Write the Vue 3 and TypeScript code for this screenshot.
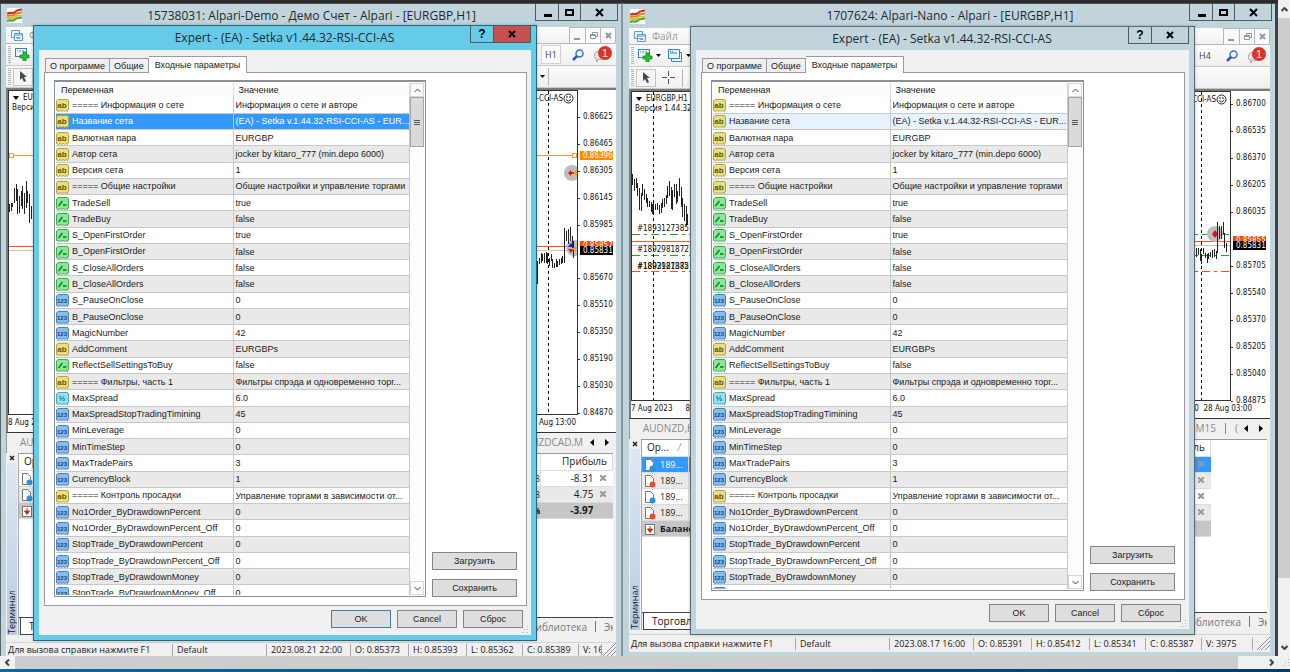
<script setup lang="ts">
type Kind = 'text' | 'flag' | 'int' | 'real'
interface Param { kind: Kind; name: string; value: string }
interface Tag { label: string; tone: string; top: number }
interface Order { dot: string; id: string; tail: string; profit: string; tone: string }
interface Terminal {
  key: string
  title: string
  dialogActive: boolean
  menu: string
  period: string
  symbol: string
  prices: string[]
  tags: Tag[]
  dateLeft: string
  dateLeft2: string
  dateRight: string
  tabLeft: string
  tabRight: string
  colLeft: string
  colRight: string
  bottomLeft: string
  bottomRight: string
  orders: Order[]
  status: string[]
  leftBars: string
  rightBars: string
}

const params: Param[] = [
  { kind: 'text', name: '===== Информация о сете', value: 'Информация о сете и авторе' },
  { kind: 'text', name: 'Название сета', value: '(EA) - Setka v.1.44.32-RSI-CCI-AS - EUR...' },
  { kind: 'text', name: 'Валютная пара', value: 'EURGBP' },
  { kind: 'text', name: 'Автор сета', value: 'jocker by kitaro_777 (min.depo 6000)' },
  { kind: 'text', name: 'Версия сета', value: '1' },
  { kind: 'text', name: '===== Общие настройки', value: 'Общие настройки и управление торгами' },
  { kind: 'flag', name: 'TradeSell', value: 'true' },
  { kind: 'flag', name: 'TradeBuy', value: 'false' },
  { kind: 'flag', name: 'S_OpenFirstOrder', value: 'true' },
  { kind: 'flag', name: 'B_OpenFirstOrder', value: 'false' },
  { kind: 'flag', name: 'S_CloseAllOrders', value: 'false' },
  { kind: 'flag', name: 'B_CloseAllOrders', value: 'false' },
  { kind: 'int', name: 'S_PauseOnClose', value: '0' },
  { kind: 'int', name: 'B_PauseOnClose', value: '0' },
  { kind: 'int', name: 'MagicNumber', value: '42' },
  { kind: 'text', name: 'AddComment', value: 'EURGBPs' },
  { kind: 'flag', name: 'ReflectSellSettingsToBuy', value: 'false' },
  { kind: 'text', name: '===== Фильтры, часть 1', value: 'Фильтры спрэда и одновременно торг...' },
  { kind: 'real', name: 'MaxSpread', value: '6.0' },
  { kind: 'int', name: 'MaxSpreadStopTradingTimining', value: '45' },
  { kind: 'int', name: 'MinLeverage', value: '0' },
  { kind: 'int', name: 'MinTimeStep', value: '0' },
  { kind: 'int', name: 'MaxTradePairs', value: '3' },
  { kind: 'int', name: 'CurrencyBlock', value: '1' },
  { kind: 'text', name: '===== Контроль просадки', value: 'Управление торгами в зависимости от...' },
  { kind: 'int', name: 'No1Order_ByDrawdownPercent', value: '0' },
  { kind: 'int', name: 'No1Order_ByDrawdownPercent_Off', value: '0' },
  { kind: 'int', name: 'StopTrade_ByDrawdownPercent', value: '0' },
  { kind: 'int', name: 'StopTrade_ByDrawdownPercent_Off', value: '0' },
  { kind: 'int', name: 'StopTrade_ByDrawdownMoney', value: '0' },
  { kind: 'int', name: 'StopTrade_ByDrawdownMoney_Off', value: '0' },
]

const kindLook: Record<Kind, { fill: string; edge: string; ink: string; mark: string }> = {
  text: { fill: '#e9df7e', edge: '#b3a53c', ink: '#5d5410', mark: 'ab' },
  flag: { fill: '#86ea92', edge: '#3fae50', ink: '#14722a', mark: '' },
  int: { fill: '#86bdf0', edge: '#4583c0', ink: '#123f78', mark: '123' },
  real: { fill: '#8fe3ee', edge: '#3fa9b8', ink: '#146878', mark: '½' },
}

/* Each bar is "x:high-low" on a grid three times finer than the plot. */
function bars(source: string, dx: number, dy: number): string {
  return source
    .split(' ')
    .map((item) => {
      const [x, high, low] = item.split(/[:-]/).map(Number)
      return `M${Math.round(x / 3) + dx}.5 ${Math.round(high / 3) + dy}V${Math.round(low / 3) + dy}`
    })
    .join('')
}

const terminals: Terminal[] = [
  {
    key: 'demo',
    title: '15738031: Alpari-Demo - Демо Счет - Alpari - [EURGBP,H1]',
    dialogActive: true,
    menu: 'Файл',
    period: 'H1',
    symbol: 'EURGBP,H1',
    prices: ['0.86625', '0.86465', '0.86305', '0.86145', '0.85985', '', '0.85670', '0.85510', '0.85350', '0.85190', '0.85030', '0.84870'],
    tags: [
      { label: '0.86396', tone: 'orange', top: 61 },
      { label: '0.85857', tone: 'red', top: 151 },
      { label: '0.85831', tone: 'black', top: 156 },
    ],
    dateLeft: '8 Aug 2023',
    dateLeft2: '',
    dateRight: '25 Aug 13:00',
    tabLeft: 'AUDNZD,H1',
    tabRight: 'NZDCAD,M',
    colLeft: 'Ордер',
    colRight: 'Прибыль',
    bottomLeft: 'Торговля',
    bottomRight: 'Эк',
    orders: [
      { dot: 'blue', id: '189...', tail: '8', profit: '-8.31', tone: 'plain' },
      { dot: 'blue', id: '189...', tail: '8', profit: '4.75', tone: 'alt' },
      { dot: 'balance', id: 'Баланс', tail: '%', profit: '-3.97', tone: 'total' },
    ],
    status: ['Default', '2023.08.21 22:00', 'O: 0.85373', 'H: 0.85393', 'L: 0.85362', 'C: 0.85389', 'V: 16'],
    leftBars: bars('30:100-122 35:95-120 40:95-108 45:50-95 50:38-90 55:55-130 60:75-125 65:60-105 70:45-115 75:65-130 80:30-110 85:60-95 90:70-155 95:105-145', -10, 80),
    rightBars: bars('25:540-610 30:530-548 35:515-545 40:520-540 45:515-545 50:513-545 55:515-550 60:530-555 66:520-540 70:535-562 75:545-560 80:535-558 85:540-558 90:535-552 95:530-548 100:525-545 106:440-545 112:450-480 118:445-490 123:437-480 128:465-500 133:480-530', 12, -10),
  },
  {
    key: 'nano',
    title: '1707624: Alpari-Nano - Alpari - [EURGBP,H1]',
    dialogActive: false,
    menu: 'Файл',
    period: 'H4',
    symbol: 'EURGBP,H1',
    prices: ['0.86700', '0.86535', '0.86370', '0.86205', '0.86035', '', '0.85705', '0.85540', '0.85370', '0.85205', '0.85040', '0.84875'],
    tags: [
      { label: '0.85855', tone: 'red', top: 145 },
      { label: '0.85831', tone: 'black', top: 150 },
    ],
    dateLeft: '7 Aug 2023',
    dateLeft2: '8 Aug',
    dateRight: '00  28 Aug 03:00',
    tabLeft: 'AUDNZD,H1',
    tabRight: 'NZDUSD,M15',
    colLeft: 'Ор...',
    colRight: 'Прибыль',
    bottomLeft: 'Торговля',
    bottomRight: 'Эк',
    orders: [
      { dot: 'blue', id: '189...', tail: '', profit: '', tone: 'picked' },
      { dot: 'red', id: '189...', tail: '', profit: '', tone: 'alt' },
      { dot: 'blue', id: '189...', tail: '', profit: '', tone: 'plain' },
      { dot: 'red', id: '189...', tail: '', profit: '', tone: 'alt' },
      { dot: 'balance', id: 'Баланс', tail: '', profit: '', tone: 'total' },
    ],
    status: ['Default', '2023.08.17 16:00', 'O: 0.85391', 'H: 0.85412', 'L: 0.85341', 'C: 0.85387', 'V: 3975'],
    leftBars: bars('25:278-312 30:295-330 35:292-322 40:305-345 45:322-388 50:335-390 55:310-345 60:325-358 65:338-365 70:350-378 75:360-378 80:362-392 85:370-398 88:358-392 94:370-388 100:366-388 105:372-400 110:366-396 115:355-380 120:350-378 125:343-368 130:315-350 134:300-345 140:318-385 145:328-388 150:310-348 155:308-370 160:330-362 165:292-345 170:318-378 175:350-408 180:370-420 185:375-435 190:400-432', -8, -11),
    rightBars: bars('45:492-520 50:500-528 56:500-522 62:505-540 67:520-550 72:500-520 78:515-530 83:520-545 88:515-535 94:512-528 100:508-530 105:505-528 110:510-535 115:422-515 120:435-475 126:435-475 131:422-460 136:455-500 141:485-512', 9, -11),
  },
]
</script>

<template>
  <main class="desktop">
    <div class="viewport">
      <section v-for="t in terminals" :key="t.key" class="terminal" :class="t.key">
        <header class="titlebar">
          <svg class="app-icon" width="15" height="15" viewBox="0 0 15 15">
            <rect width="15" height="15" fill="#fff" />
            <g fill="none" stroke-width="2">
              <path d="M0 6C3 3 5 7 8 4S12 3 15 1" stroke="#c9302a" />
              <path d="M0 8.500C3 5.500 5 9.500 8 6.500S12 6 15 4" stroke="#e2812c" />
              <path d="M0 11C3 8 5 12 8 9S12 9 15 7" stroke="#d8c028" />
              <path d="M0 13.500C3 10.500 5 14.500 8 11.500S12 11 15 9.500" stroke="#46a83a" />
            </g>
          </svg>
          <h1>{{ t.title }}</h1>
          <div class="sysbuttons">
            <button type="button" aria-label="Свернуть"><svg width="9" height="9"><path d="M1 6h8v3H1z" /></svg></button>
            <button type="button" aria-label="Развернуть"><svg width="9" height="9"><path d="M0 1h9v7H0zM2 3v3h5V3z" fill-rule="evenodd" /></svg></button>
            <button type="button" class="wide" aria-label="Закрыть"><svg width="9" height="9"><path d="M1 1l7 7M8 1l-7 7" stroke="#000" stroke-width="2" /></svg></button>
          </div>
        </header>

        <div class="workspace">
          <nav class="menubar">
            <svg width="13" height="13" fill="#e6f2fc" stroke="#5b9bd8"><path d="M1.500 1.500h8v7h-8z" /><path d="M4.500 4.500h8v7h-8zM4.500 6h8" /><path d="M6 9l1-1 1 2 1-2 1 2" fill="none" /></svg>
            <a href="#file">{{ t.menu }}</a>
            <div class="mdi">
              <button type="button" aria-label="Свернуть график"><svg width="9" height="9"><path d="M1 7h6v2H1z" fill="#8d99a8" /></svg></button>
              <button type="button" aria-label="Восстановить график"><svg width="9" height="9" fill="none" stroke="#8d99a8"><path d="M3.500 3V1.500h5v4H7M1.500 3.500h5v4h-5zM1 4.500h6" /></svg></button>
              <button type="button" aria-label="Закрыть график"><svg width="9" height="9"><path d="M2 2l5 5M7 2l-5 5" stroke="#8d99a8" stroke-width="2" /></svg></button>
            </div>
          </nav>

          <div class="toolbar">
            <i class="grip"></i>
            <svg width="15" height="13"><rect x=".5" y=".5" width="11" height="8" fill="#f4fbff" stroke="#3a82c8" /><path d="M2 3h1M4 3h2M7 3h2" stroke="#3a82c8" /><path d="M8 4h3v3h3v3h-3v3H8v-3H5V7h3z" fill="#1fc52f" stroke="#12891f" stroke-width=".8" /></svg>
            <svg class="caret" width="5" height="3"><path d="M0 0h5L2.500 3z" /></svg>
            <svg class="gap" width="15" height="13" fill="#e8f4fc" stroke="#3a82c8"><path d="M3.500 3.500h10v9h-10z" /><path d="M.5 .5h11v9H.5z" /><path d="M2 4h7M2 2.500h1M4 2.500h1" /></svg>
            <svg class="caret" width="5" height="3"><path d="M0 0h5L2.500 3z" /></svg>
            <div class="tools-right">
              <button type="button" class="period">{{ t.period }}</button>
              <svg class="search" width="12" height="12" fill="none"><circle cx="7.500" cy="4.500" r="3.500" stroke="#3b6fd6" stroke-width="1.500" /><path d="M5 7L1 11" stroke="#2b58c0" stroke-width="2.500" /></svg>
              <svg class="alerts" width="20" height="18"><path d="M2 8c0-4 9-4 9 1s-4 5-6 4l-1 3-1-3C1 12 1 9 2 8z" fill="#e2e2e6" stroke="#a8a8b0" /><circle cx="12" cy="7" r="7" fill="#df3320" /><text x="9" y="11" font-size="11" fill="#fff" font-family="Liberation Sans, sans-serif">1</text></svg>
            </div>
          </div>

          <div class="toolbar second">
            <i class="grip"></i>
            <button type="button" class="pointer" aria-label="Курсор"><svg width="9" height="12"><path d="M1 0v9l2-2 2 4 2-1-2-4h3z" fill="#4a4a4a" /></svg></button>
            <svg class="cross" width="13" height="13" stroke="#555" fill="none"><path d="M6.500 0v5M6.500 8v5M0 6.500h5M8 6.500h5" /></svg>
            <i class="rule"></i>
            <div v-if="t.dialogActive" class="tools-right"><svg class="caret" width="5" height="3"><path d="M0 0h5L2.500 3z" /></svg><i class="rule"></i></div>
          </div>

          <div class="chart">
            <div class="plot-row">
              <div class="plot">
                <template v-if="t.dialogActive">
                  <svg class="lines" width="100%" height="100%">
                    <path d="M0 64.500h2000" stroke="#f79a2c" />
                    <path d="M0 155.500h2000" stroke="#ff4a10" />
                    <path d="M0 159.500h2000" stroke="#c4c4c4" />
                    <rect x=".5" y="62.500" width="4" height="4" fill="#fff" stroke="#f79a2c" />
                    <path :d="t.leftBars" stroke="#222" />
                  </svg>
                  <svg class="edge" width="60" height="100%">
                    <path d="M31.500 0v400" stroke="#000" stroke-dasharray="3 3" />
                    <circle cx="55" cy="82" r="8" fill="#bdbdbd" />
                    <path d="M51 82l3-3v2h3v2h-3v2z" fill="#e01010" /><path d="M56 82l4-3v6z" fill="#f5a300" />
                    <circle cx="57" cy="157" r="8" fill="#bdbdbd" />
                    <path :d="t.rightBars" stroke="#222" />
                    <path d="M51 156l3-4 3 4z" fill="#1818e0" /><path d="M51 158h6l-3 4z" fill="#e01010" /><path d="M55 158l4-3v6z" fill="#f5a300" />
                    <rect x="55.500" y="62.500" width="4" height="4" fill="#fff" stroke="#f79a2c" />
                  </svg>
                </template>
                <template v-else>
                  <svg class="lines" width="100%" height="100%">
                    <g stroke-dasharray="8 4 3 4"><path d="M0 142.500h2000M0 163.500h2000" stroke="#2f9a2f" /><path d="M0 179.500h2000" stroke="#ff4a10" /></g>
                    <path d="M0 149.500h2000" stroke="#ff5a1c" />
                    <path d="M0 153.500h2000" stroke="#c4c4c4" />
                    <path d="M21.500 0v400" stroke="#000" stroke-dasharray="3 3" />
                    <path :d="t.leftBars" stroke="#222" />
                  </svg>
                  <svg class="edge" width="60" height="100%">
                    <circle cx="45" cy="142" r="8" fill="#bdbdbd" />
                    <path d="M31.500 0v400" stroke="#000" stroke-dasharray="3 3" />
                    <path d="M42 142l3-4 3 4-3 4z" fill="#e01010" />
                    <path :d="t.rightBars" stroke="#222" />
                  </svg>
                  <span class="order-line first">#1893127385 sell</span>
                  <span class="order-line second">#1892981872 sell</span>
                  <span class="order-line third">#1892981872 tp</span>
                  <span class="order-line third">#1893127385 tp</span>
                </template>
                <div class="caption"><svg width="6" height="4"><path d="M0 0h6L3 4z" /></svg><span>{{ t.symbol }}</span></div>
                <div class="version">Версия 1.44.32</div>
                <div class="expert"><span>RSI-CCI-AS</span><svg width="11" height="11" fill="none" stroke="#222"><circle cx="5.500" cy="5.500" r="4.500" /><path d="M3 6.500q2.500 3 5 0M4 3v2M7 3v2" /></svg></div>
              </div>
              <div class="prices">
                <span v-for="(p, i) in t.prices" :key="i" :class="{ blank: !p }">{{ p }}</span>
                <b v-for="g in t.tags" :key="g.label" :class="g.tone" :style="{ top: g.top + 'px' }">{{ g.label }}</b>
              </div>
            </div>
            <div class="dates"><span>{{ t.dateLeft }}</span><span class="next">{{ t.dateLeft2 }}</span><span class="last">{{ t.dateRight }}</span></div>
          </div>

          <div class="tabstrip">
            <button type="button">{{ t.tabLeft }}</button>
            <div class="tab-end">
              <button type="button">{{ t.tabRight }}</button>
              <span v-if="!t.dialogActive" class="cut"><i></i>(</span>
              <svg width="4" height="7"><path d="M4 0v7L0 3.500z" /></svg>
              <svg width="4" height="7"><path d="M0 0v7l4-3.500z" /></svg>
            </div>
          </div>

          <div class="panel">
            <div class="side">
              <button type="button" aria-label="Закрыть панель"><svg width="6" height="6"><path d="M1 1l4 4M5 1L1 5" stroke="#222" stroke-width="1.500" /></svg></button>
              <span>Терминал</span>
            </div>
            <div class="panel-main">
              <div class="sheet">
                <table class="orders">
                  <colgroup><col class="w-id" /><col /><col class="w-sum" /><col class="w-x" /></colgroup>
                  <thead><tr><th>{{ t.colLeft }} <em v-if="!t.dialogActive">/</em></th><th></th><th class="c-end" colspan="2">{{ t.colRight }}</th></tr></thead>
                  <tbody>
                    <tr v-for="(o, i) in t.orders" :key="i" :class="o.tone">
                      <td class="c-id">
                        <svg v-if="o.dot !== 'balance'" width="12" height="13"><path d="M1.500 .5h5l3 3v8h-8z" fill="#fff" stroke="#777" /><circle cx="8.500" cy="9.500" r="3" :fill="o.dot === 'blue' ? '#2f8fd8' : '#e0502a'" /></svg>
                        <svg v-else width="12" height="13"><rect x="1.500" y="1.500" width="9" height="10" fill="#fff" stroke="#777" /><path d="M6 3v4M3.500 6L6 9.500 8.500 6z" stroke="#cc2d12" fill="#cc2d12" /></svg>{{ o.id }}
                      </td>
                      <td class="c-mid">{{ o.tail }}</td>
                      <td class="c-sum">{{ o.profit }}</td>
                      <td class="c-x"><svg v-if="o.tone !== 'total'" width="6" height="6"><path d="M0 0l6 6M6 0L0 6" stroke="#999" stroke-width="2" /></svg></td>
                    </tr>
                  </tbody>
                </table>
              </div>
              <div class="panel-tabs">
                <button type="button" class="on">{{ t.bottomLeft }}</button>
                <div class="more"><button type="button">Библиотека</button><i></i><button type="button" class="trim">{{ t.bottomRight }}</button></div>
              </div>
            </div>
          </div>

          <footer class="status">
            <span class="hint">Для вызова справки нажмите F1</span>
            <span v-for="s in t.status" :key="s">{{ s }}</span>
            <svg width="13" height="13" stroke="#8a8a8a" fill="none"><path d="M0 13L13 0M4 13l9-9M8 13l5-5" /></svg>
          </footer>
        </div>

        <div class="dialog" :class="{ active: t.dialogActive }" role="dialog">
          <header>
            <h2>Expert - (EA) - Setka v1.44.32-RSI-CCI-AS</h2>
            <div class="sysbuttons">
              <button type="button">?</button>
              <button type="button" class="wide close" aria-label="Закрыть"><svg width="9" height="9"><path d="M1 1l6 6M7 1L1 7" stroke="#000" stroke-width="2" /></svg></button>
            </div>
          </header>
          <div class="body">
            <div class="tabs" role="tablist">
              <button type="button" role="tab">О программе</button>
              <button type="button" role="tab">Общие</button>
              <button type="button" role="tab" class="on">Входные параметры</button>
            </div>
            <div class="page">
              <div class="list">
                <div class="rows">
                  <table>
                    <thead><tr><th>Переменная</th><th>Значение</th></tr></thead>
                    <tbody>
                      <tr v-for="(p, i) in params" :key="p.name" :class="{ picked: i === 1 }">
                        <td class="name">
                          <svg width="13" height="13">
                            <path d="M.5 2L2 .5h9.500l1 1.500v8l-1 2.500-1.500-1-1.500 1-1.500-1-1.500 1-1.500-1-1.500 1-2-1z" :fill="kindLook[p.kind].fill" :stroke="kindLook[p.kind].edge" />
                            <path v-if="p.kind === 'flag'" d="M2.500 9l4-5M7 8h3.500" fill="none" :stroke="kindLook.flag.ink" stroke-width="1.300" />
                            <text v-else x="6" y="9" text-anchor="middle" font-weight="bold" font-family="Liberation Sans, sans-serif" :font-size="p.kind === 'int' ? 6 : 8" :fill="kindLook[p.kind].ink">{{ kindLook[p.kind].mark }}</text>
                          </svg>{{ p.name }}
                        </td>
                        <td>{{ p.value }}</td>
                      </tr>
                    </tbody>
                  </table>
                </div>
                <div class="scroll">
                  <button type="button" aria-label="Вверх"><svg width="7" height="5" fill="none" stroke="#444"><path d="M.5 4l3-3 3 3" /></svg></button>
                  <div class="thumb"><i></i><i></i><i></i></div>
                  <button type="button" class="down" aria-label="Вниз"><svg width="7" height="5" fill="none" stroke="#444"><path d="M.5 1l3 3 3-3" /></svg></button>
                </div>
              </div>
              <div class="actions">
                <button type="button" class="push">Загрузить</button>
                <button type="button" class="push">Сохранить</button>
              </div>
            </div>
            <div class="answers">
              <button type="button" class="push" :class="{ primary: t.dialogActive }">OK</button>
              <button type="button" class="push">Cancel</button>
              <button type="button" class="push">Сброс</button>
              <svg class="dots" width="7" height="7" fill="#b5b5b5"><path d="M5 0h1v1H5zM5 3h1v1H5zM2 3h1v1H2zM5 6h1v1H5zM2 6h1v1H2zM0 6h1v1H0z" /></svg>
            </div>
          </div>
        </div>
      </section>

      <div class="vbar">
        <button type="button" aria-label="Прокрутить вверх"><svg width="7" height="5" fill="none" stroke="#444" stroke-width="2"><path d="M.5 4l3-3 3 3" /></svg></button>
        <div class="vthumb"></div>
        <div class="vrest"></div>
        <button type="button" aria-label="Прокрутить вниз"><svg width="7" height="5" fill="none" stroke="#444" stroke-width="2"><path d="M.5 1l3 3 3-3" /></svg></button>
      </div>
    </div>
    <div class="hbar">
      <button type="button" aria-label="Прокрутить влево"><svg width="5" height="7" fill="none" stroke="#444" stroke-width="2"><path d="M4 .5l-3 3 3 3" /></svg></button>
      <div class="hthumb"></div>
      <button type="button" class="right" aria-label="Прокрутить вправо"><svg width="5" height="7" fill="none" stroke="#444" stroke-width="2"><path d="M1 .5l3 3-3 3" /></svg></button>
      <svg width="7" height="7" fill="#b5b5b5"><path d="M5 0h1v1H5zM5 3h1v1H5zM2 3h1v1H2zM5 6h1v1H5zM2 6h1v1H2zM0 6h1v1H0z" /></svg>
    </div>
  </main>
</template>

<style>
body { margin: 0; background: #0b5c8e; }
</style>

<style scoped>
* { box-sizing: border-box; }
.desktop { min-height: 100vh; display: flex; flex-direction: column; padding-bottom: 3px; background: linear-gradient(90deg, #0a6a9c, #003a72); font: 10px/14px "Open Sans", "Noto Sans", sans-serif; color: #1a1a1a; }
button { font: inherit; color: inherit; padding: 0; border: 0; background: none; }
svg { display: block; flex: none; }
h1, h2 { margin: 0; font-weight: 400; font-size: 12px; color: #1d2a30; white-space: nowrap; text-align: center; }
.viewport { flex: 1; display: grid; grid-template-columns: minmax(0, 623fr) minmax(0, 655fr) 12px; background: #2c2c2c; }
.terminal { position: relative; display: flex; flex-direction: column; margin: 3px 0 0; border-top: 1px solid #4a5256; background: #c1d4dc; }
.demo { border-left: 1px solid #56646c; border-right: 2px solid #8496a0; padding: 0 5px; }
.nano { border-right: 3px solid #3c4347; padding: 0 5px 4px 6px; }
.titlebar { height: 23px; display: flex; align-items: center; }
.nano .titlebar { height: 24px; }
.app-icon { margin-left: 1px; }
.titlebar h1 { flex: 1; padding-left: 66px; }
.sysbuttons { display: flex; align-self: flex-start; border: 1px solid #4d5b63; border-top: 0; }
.sysbuttons button { height: 16px; width: 22px; display: grid; place-items: center; font-weight: 700; font-size: 12px; line-height: 16px; color: #000; }
.sysbuttons button + button { border-left: 1px solid #4d5b63; }
.sysbuttons .wide { width: 37px; }
.titlebar .sysbuttons { margin-right: -2px; }
.workspace { flex: 1; display: flex; flex-direction: column; background: #f0f0f0; min-height: 0; }
.menubar { height: 17px; display: flex; align-items: center; padding-left: 4px; background: linear-gradient(#fdfdfd, #f2f2f2); border-bottom: 1px solid #b9b9b9; gap: 6px; }
.menubar a { color: #9b9b9b; text-decoration: none; flex: 1; }
.mdi { display: flex; border: 1px solid #b0b8c0; border-width: 1px 1px 0 1px; }
.mdi button { width: 15px; height: 15px; display: grid; place-items: center; background: #fafafa; }
.mdi button + button { border-left: 1px solid #b0b8c0; }
.toolbar { height: 22px; display: flex; align-items: center; padding-left: 2px; background: linear-gradient(#fbfbfb, #f0f0f0); border-bottom: 1px solid #c9c9c9; }
.grip { width: 3px; height: 17px; margin-right: 4px; background: repeating-linear-gradient(#b5b5b5 0 1px, #f5f5f5 1px 2px); }
.second .grip { margin-right: 2px; }
.caret { margin: 0 3px; }
.gap { margin-left: 4px; }
.tools-right { margin-left: auto; display: flex; align-items: center; }
.period { width: 20px; height: 19px; margin-right: 11px; font-size: 9px; color: #444; }
.demo .period { background: #fafafa; border: 1px solid #cfcfcf; }
.search { margin-right: 9px; }
.alerts { margin-right: 3px; }
.demo .second .tools-right { margin-right: 67px; }
.pointer { width: 20px; height: 18px; display: grid; place-items: center; background: #f6f6f6; border: 1px solid #c4c4c4; }
.cross { margin: 0 7px 0 6px; }
.rule { width: 1px; height: 18px; background: #b5b5b5; }
.chart { flex: 1; min-height: 0; display: flex; flex-direction: column; background: #fff; border-top: 2px solid #7b7b7b; border-left: 2px solid #7b7b7b; border-bottom: 1px solid #333; font: 8px/10px "DejaVu Sans Condensed", "DejaVu Sans", sans-serif; color: #111; }
.plot-row { flex: 1; display: flex; min-height: 0; }
.plot { flex: 1; position: relative; overflow: hidden; border: 1px solid #333; }
.lines, .edge { position: absolute; top: 0; left: 0; }
.edge { left: auto; right: 0; }
.caption, .version, .expert, .order-line { position: absolute; white-space: nowrap; }
.caption { top: 2px; left: 4px; display: flex; align-items: center; gap: 4px; }
.version { top: 12px; left: 3px; }
.expert { top: 2px; right: 3px; display: flex; align-items: center; }
.order-line { left: 5px; }
.first { top: 132px; }
.order-line.second { top: 153px; }
.third { top: 170px; }
.prices { position: relative; width: 38px; display: flex; flex-direction: column; justify-content: space-between; margin: 22px 0 -3px; }
.nano .prices { margin: 8px 0 -5px; width: 39px; }
.prices span { height: 10px; padding-left: 5px; background: linear-gradient(#333, #333) no-repeat 0 5px / 2px 1px; }
.prices .blank { background: none; }
.prices b { position: absolute; left: 2px; width: 33px; padding-left: 3px; margin-top: -22px; font-weight: 400; color: #fff; line-height: 9px; height: 9px; }
.nano .prices b { margin-top: -8px; }
.orange { background: #ff8c00; }
.red { background: #ff4500; }
.black { background: #000; }
.dates { height: 17px; padding: 3px 0 0; display: flex; white-space: pre; }
.dates .next { margin-left: 13px; }
.dates .last { margin-left: auto; margin-right: 40px; }
.nano .dates .last { margin-right: 18px; }
.tabstrip { height: 20px; display: flex; justify-content: space-between; border-left: 1px solid #999; padding: 0 7px 2px 13px; color: #8a8a8a; }
.tab-end { display: flex; align-items: center; gap: 11px; fill: #000; }
.tab-end button { margin-right: -4px; }
.nano .tab-end button { margin-right: 0; }
.tab-end .cut { display: flex; align-items: center; gap: 9px; margin: 0 -5px 0 -2px; }
.tab-end i { width: 1px; height: 11px; background: #888; }
.panel { height: 182px; display: flex; }
.nano .panel { height: 191px; }
.side { width: 12px; display: flex; flex-direction: column; align-items: center; }
.side button { height: 10px; display: grid; place-items: center; }
.side span { flex: 1; width: 10px; writing-mode: vertical-rl; transform: rotate(180deg); background: linear-gradient(#b9cbe2, #dfe8f2); line-height: 10px; padding-top: 1px; font-size: 9px; }
.panel-main { flex: 1; min-width: 0; display: flex; flex-direction: column; margin-right: 3px; border-top: 1px solid #999; border-left: 1px solid #aaa; }
.sheet { flex: 1; background: #fff; min-height: 0; border-bottom: 1px solid #444; }
.orders { border-collapse: collapse; width: 100%; table-layout: fixed; }
.nano .orders { width: calc(100% - 56px); }
.w-id { width: 46px; }
.w-sum { width: 53px; }
.w-x { width: 19px; }
.orders th { height: 16px; padding: 0 5px; font-weight: 400; line-height: 15px; text-align: left; white-space: nowrap; border-right: 1px solid #ddd; border-bottom: 1px solid #ddd; overflow: hidden; }
.orders th em { color: #999; margin-left: 6px; }
.orders .c-end { text-align: right; }
.orders td { height: 16px; padding: 0; font-size: 9px; line-height: 15px; border-bottom: 1px solid #dcdcdc; white-space: nowrap; overflow: hidden; }
.c-mid { text-align: right; }
.orders td.c-mid { border-right: 1px solid #ddd; }
.orders td.c-id { border-right: 1px solid #ddd; overflow: visible; }
.c-id svg { display: inline-block; vertical-align: middle; margin: 0 4px 0 2px; }
.orders .c-sum { text-align: right; font-size: 10px; }
.orders td.c-x { padding-left: 7px; }
.alt { background: #e9e9e9; }
.orders .total { background: #c6c6c6; font-weight: 700; }
.orders .total td { border-right: 0; }
.orders .picked { background: #3399ff; color: #fff; }
.panel-tabs { height: 17px; display: flex; justify-content: space-between; color: #777; }
.panel-tabs .on { background: #fff; color: #111; border: 1px solid #444; border-top: 0; padding: 0 8px; margin-left: 1px; }
.more { display: flex; align-items: center; gap: 8px; overflow: hidden; }
.more i { width: 1px; height: 11px; background: #777; }
.trim { width: 9px; overflow: hidden; white-space: nowrap; text-align: left; }
.status { height: 14px; margin-top: 7px; display: flex; align-items: center; border-top: 1px solid #d5d5d5; white-space: nowrap; font-size: 9px; line-height: 12px; }
.nano .status { height: 18px; margin-top: 4px; }
.status span { border-left: 1px solid #a8a8a8; padding-left: 4px; overflow: hidden; flex: 0 0 58px; }
.status .hint { flex-basis: 166px; border: 0; padding-left: 2px; }
.status span:nth-child(2) { flex-basis: 94px; }
.status span:nth-child(3) { flex-basis: 84px; }
.status span:nth-child(6), .status span:nth-child(7) { flex-basis: 56px; }
.status span:nth-child(8) { flex: 0 1 52px; border-right: 1px solid #a8a8a8; }
.demo .status span:nth-child(8) { flex-basis: 24px; }
.status svg { margin-left: auto; }

.dialog { position: absolute; top: 21px; bottom: 15px; left: 32px; right: 84px; display: flex; flex-direction: column; background: #c1d4dc; border: 1px solid #5c686e; padding: 0 5px 5px; font: 9px/14px "Liberation Sans", Arial, sans-serif; box-shadow: 0 0 3px rgba(0, 0, 0, .25); }
.nano .dialog { top: 22px; left: 67px; right: 80px; bottom: 21px; }
.dialog.active { background: #66cae9; border-color: #2e6478; }
.dialog > header { height: 24px; display: flex; }
.nano .dialog > header { height: 23px; }
.dialog h2 { flex: 1; font-family: "Open Sans", "Noto Sans", sans-serif; line-height: 24px; padding-left: 60px; }
.active .close { background: #c75050; }
.body { flex: 1; min-height: 0; display: flex; flex-direction: column; background: #f0f0f0; border: 1px solid #e8f4f8; padding: 6px 3px 6px 4px; }
.tabs { display: flex; align-items: flex-end; height: 16px; padding-left: 1px; margin-bottom: -1px; position: relative; }
.tabs button { height: 14px; margin-bottom: 1px; padding: 0 4px; border: 1px solid #9a9aa4; border-bottom: 0; border-left-width: 0; white-space: nowrap; line-height: 14px; }
.tabs button:first-child { border-left-width: 1px; }
.tabs .on { height: 17px; margin: 0; padding: 0 6px; background: #fff; line-height: 15px; }
.page { flex: 1; min-height: 0; display: flex; background: #fff; border: 1px solid #9a9aa4; padding: 7px 9px 8px; gap: 6px; }
.list { flex: 1; min-width: 0; display: flex; border: 1px solid #8a8f98; border-top-width: 2px; overflow: hidden; padding: 1px; }
.rows { flex: 1; min-width: 0; overflow: hidden; }
.rows table { width: 100%; height: 519px; border-collapse: collapse; table-layout: fixed; }
.rows th { height: 14px; padding: 0 5px; font-weight: 400; text-align: left; line-height: 13px; background: #fcfcfc; border-right: 1px solid #dcdcdc; }
.rows th:first-child { width: 177px; }
.rows td { height: 16px; padding: 0 0 0 2px; line-height: 14px; white-space: nowrap; overflow: hidden; border-right: 1px solid #c8c8c8; border-bottom: 1px solid #c8c8c8; }
.rows .name { padding-left: 0; }
.rows .name svg { display: inline-block; vertical-align: middle; margin-right: 3px; }
.rows tbody tr:nth-child(even) { background: #e9e9e9; }
.rows tbody tr.picked { background: #e6f2ff; }
.active .rows tbody tr.picked { background: #3399ff; color: #fff; }
.scroll { width: 14px; display: flex; flex-direction: column; background: #fdfdfd; }
.scroll button { height: 14px; display: grid; place-items: center; border: 1px solid #d5d5d5; }
.scroll .down { margin-top: auto; }
.thumb { height: 50px; background: #dadada; border: 1px solid #a5a5a5; display: flex; flex-direction: column; align-items: center; justify-content: center; gap: 1px; }
.thumb i { width: 6px; height: 1px; background: #555; }
.actions { width: 85px; display: flex; flex-direction: column; justify-content: flex-end; gap: 9px; }
.push { height: 18px; background: #dedede; border: 1px solid #858585; }
.primary { border-color: #3c7fb1; }
.answers { position: relative; display: flex; justify-content: flex-end; gap: 6px; padding: 4px 4px 0 0; }
.answers .push { width: 60px; }
.dots { position: absolute; right: -2px; bottom: -5px; }

.vbar { display: flex; flex-direction: column; background: #f0f0f0; }
.vbar button { height: 18px; display: grid; place-items: center; }
.vthumb { flex: 560; background: #cdcdcd; }
.vrest { flex: 60; }
.hbar { height: 13px; display: flex; align-items: center; background: #f0f0f0; }
.hbar button { width: 15px; height: 13px; display: grid; place-items: center; }
.hthumb { flex: 1; align-self: stretch; background: #cdcdcd; }
.hbar .right { margin-left: 26px; margin-right: 4px; }
</style>
